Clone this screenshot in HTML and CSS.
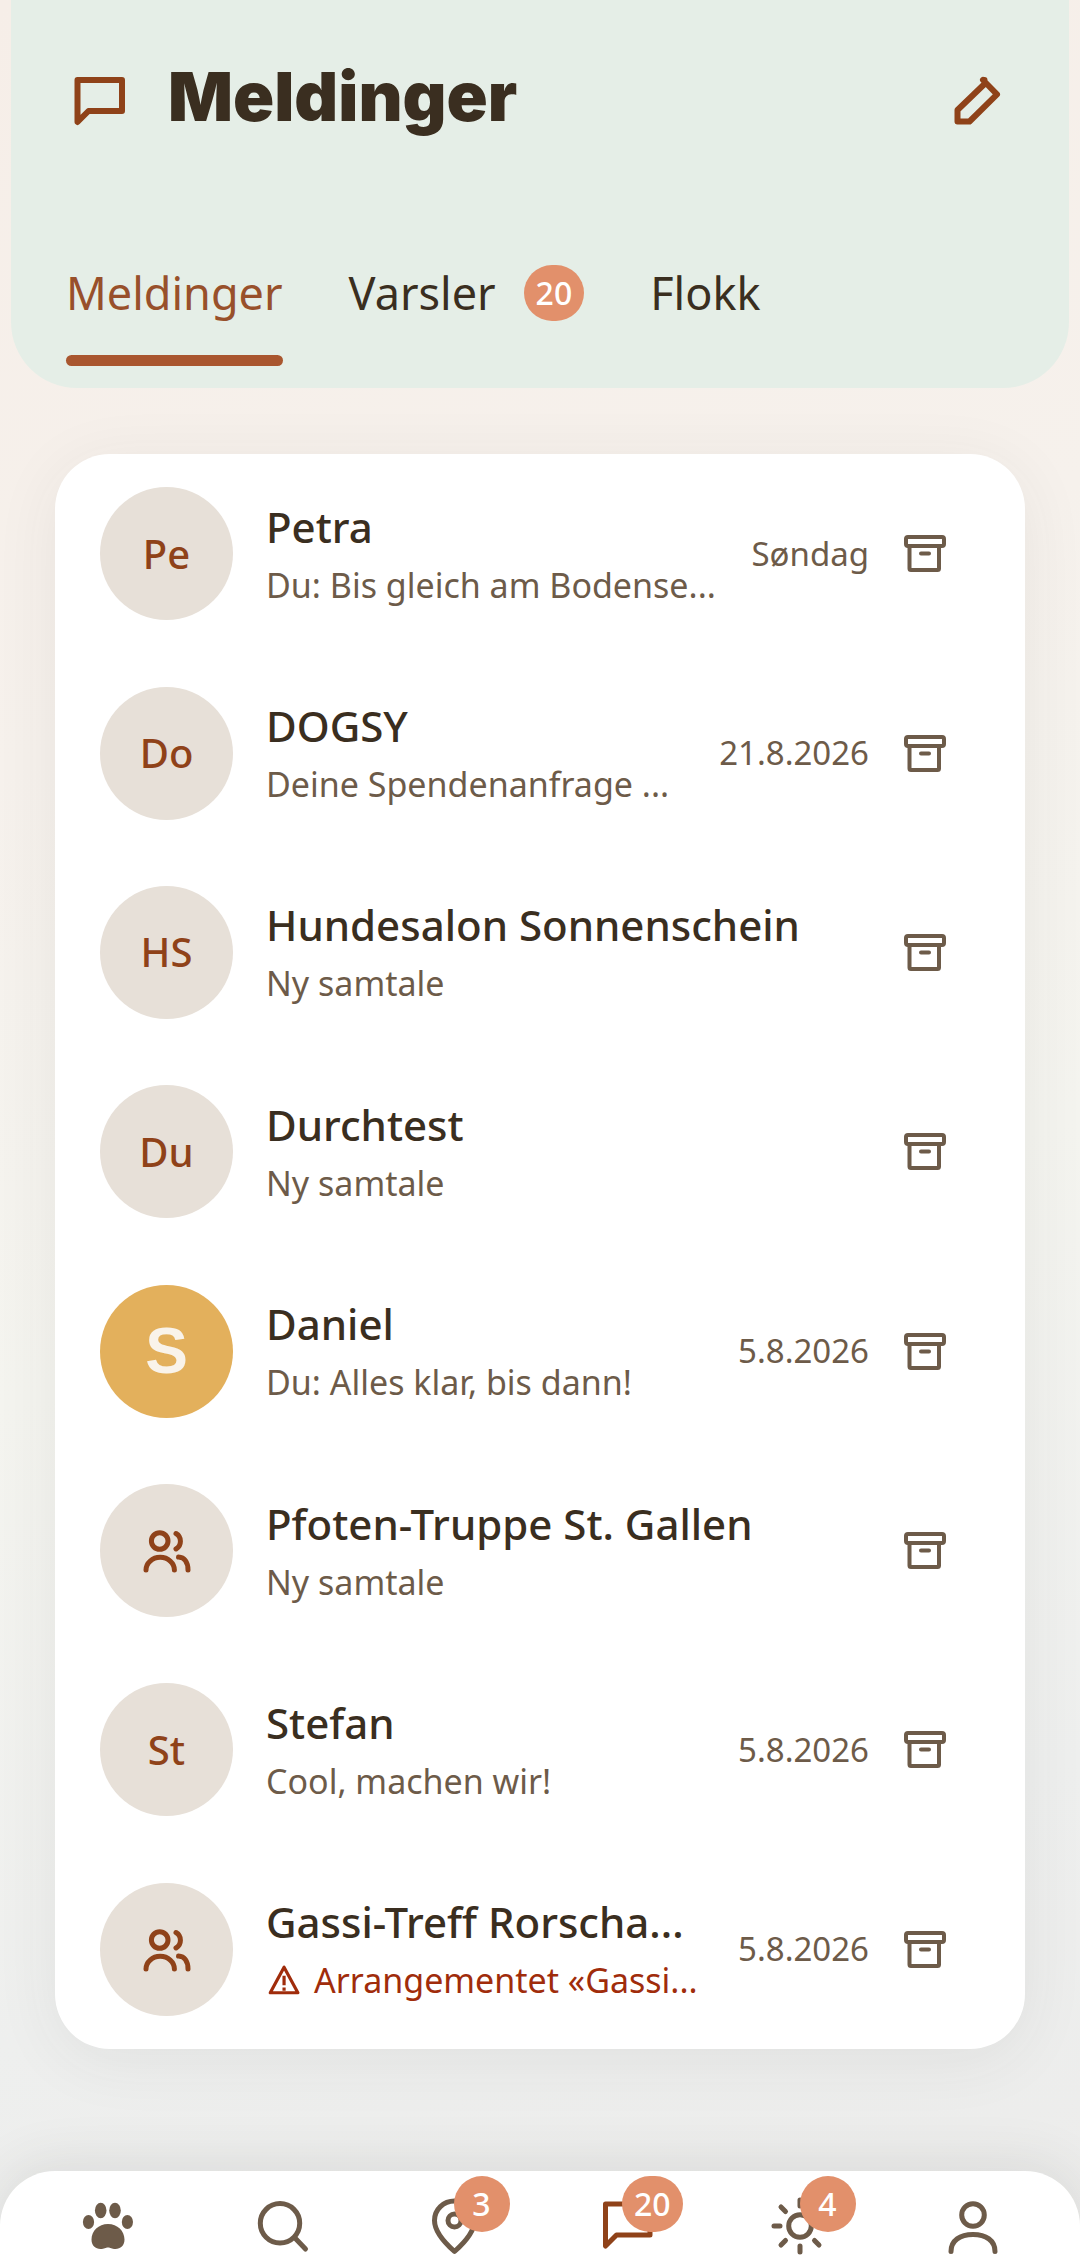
FILE: index.html
```html
<!DOCTYPE html>
<html lang="no">
<head>
    <meta charset="UTF-8">
    <meta name="viewport" content="width=device-width, initial-scale=1.0">
    <title>Meldinger</title>
    <link rel="stylesheet" href="styles.css">
</head>
<body>

    <!-- Shared icons -->
    <svg class="sprite" aria-hidden="true">
        <symbol id="icon-archive" viewBox="0 0 55 55">
            <rect x="9" y="11" width="38" height="9" rx="2"/>
            <path d="M12.5 20v22.5a1.5 1.5 0 0 0 1.5 1.5h26.5a1.5 1.5 0 0 0 1.5-1.5V20M24 27.5h8"/>
        </symbol>
        <symbol id="icon-chat" viewBox="0 0 66 66">
            <path d="M11.5 11H56v31H22.5L11.5 53z"/>
        </symbol>
        <symbol id="icon-group" viewBox="0 0 55 55">
            <circle cx="20.7" cy="18" r="8.3"/>
            <path d="M7 47a14.2 12.7 0 0 1 28.4 0M37 10.5a9 9 0 0 1 0 15.5M39.5 34c6 .3 9.5 5 9.5 13"/>
        </symbol>
    </svg>

    <header class="header">
        <div class="header-top">
            <svg class="icon icon-lg"><use href="#icon-chat"/></svg>
            <h1>Meldinger</h1>
            <button class="edit-btn" type="button" aria-label="Ny melding">
                <svg class="icon icon-lg" viewBox="0 0 66 66">
                    <path d="M36.5 15 9.5 41v11.5h12L49 25.3 35 11M36.5 11v4"/>
                </svg>
            </button>
        </div>
        <nav class="tabs">
            <a class="tab active" href="#meldinger">Meldinger</a>
            <a class="tab" href="#varsler">Varsler <span class="badge">20</span></a>
            <a class="tab" href="#flokk">Flokk</a>
        </nav>
    </header>

    <main>
        <ul class="chat-list">
            <li class="chat">
                <span class="avatar">Pe</span>
                <a class="chat-text" href="#petra">
                    <span class="name">Petra</span>
                    <span class="preview">Du: Bis gleich am Bodense...</span>
                </a>
                <time>Søndag</time>
                <button class="archive-btn" type="button" aria-label="Arkiver"><svg class="icon"><use href="#icon-archive"/></svg></button>
            </li>
            <li class="chat">
                <span class="avatar">Do</span>
                <a class="chat-text" href="#dogsy">
                    <span class="name">DOGSY</span>
                    <span class="preview">Deine Spendenanfrage ...</span>
                </a>
                <time>21.8.2026</time>
                <button class="archive-btn" type="button" aria-label="Arkiver"><svg class="icon"><use href="#icon-archive"/></svg></button>
            </li>
            <li class="chat">
                <span class="avatar">HS</span>
                <a class="chat-text" href="#hundesalon">
                    <span class="name">Hundesalon Sonnenschein</span>
                    <span class="preview">Ny samtale</span>
                </a>
                <button class="archive-btn" type="button" aria-label="Arkiver"><svg class="icon"><use href="#icon-archive"/></svg></button>
            </li>
            <li class="chat">
                <span class="avatar">Du</span>
                <a class="chat-text" href="#durchtest">
                    <span class="name">Durchtest</span>
                    <span class="preview">Ny samtale</span>
                </a>
                <button class="archive-btn" type="button" aria-label="Arkiver"><svg class="icon"><use href="#icon-archive"/></svg></button>
            </li>
            <li class="chat">
                <span class="avatar avatar-photo">S</span>
                <a class="chat-text" href="#daniel">
                    <span class="name">Daniel</span>
                    <span class="preview">Du: Alles klar, bis dann!</span>
                </a>
                <time>5.8.2026</time>
                <button class="archive-btn" type="button" aria-label="Arkiver"><svg class="icon"><use href="#icon-archive"/></svg></button>
            </li>
            <li class="chat">
                <span class="avatar"><svg class="icon"><use href="#icon-group"/></svg></span>
                <a class="chat-text" href="#pfoten-truppe">
                    <span class="name">Pfoten-Truppe St. Gallen</span>
                    <span class="preview">Ny samtale</span>
                </a>
                <button class="archive-btn" type="button" aria-label="Arkiver"><svg class="icon"><use href="#icon-archive"/></svg></button>
            </li>
            <li class="chat">
                <span class="avatar">St</span>
                <a class="chat-text" href="#stefan">
                    <span class="name">Stefan</span>
                    <span class="preview">Cool, machen wir!</span>
                </a>
                <time>5.8.2026</time>
                <button class="archive-btn" type="button" aria-label="Arkiver"><svg class="icon"><use href="#icon-archive"/></svg></button>
            </li>
            <li class="chat">
                <span class="avatar"><svg class="icon"><use href="#icon-group"/></svg></span>
                <a class="chat-text" href="#gassi-treff">
                    <span class="name">Gassi-Treff Rorscha...</span>
                    <span class="preview warning"><svg class="warning-icon" viewBox="0 0 32 32"><path d="M17 4 4 28h26zM17 12v9M17 23v3"/></svg>Arrangementet «Gassi...</span>
                </a>
                <time>5.8.2026</time>
                <button class="archive-btn" type="button" aria-label="Arkiver"><svg class="icon"><use href="#icon-archive"/></svg></button>
            </li>
        </ul>
    </main>

    <!-- Bottom navigation -->
    <nav class="bottom-nav">
        <a href="#hjem" aria-label="Hjem">
            <svg class="icon icon-lg paw" viewBox="0 0 66 66">
                <ellipse cx="13.5" cy="29" rx="5.6" ry="7"/>
                <ellipse cx="25.7" cy="17.5" rx="5.8" ry="7.7"/>
                <ellipse cx="40" cy="17.5" rx="5.8" ry="7.7"/>
                <ellipse cx="52.4" cy="29" rx="5.6" ry="7"/>
                <path d="M33 31c9.5 0 16.5 7 16.5 15.5 0 6-4 9.500-9 9.500-4 0-5-1.500-7.500-1.500S29.500 56 25.500 56c-5 0-9-3.500-9-9.500C16.500 38 23.500 31 33 31z"/>
            </svg>
        </a>
        <a href="#sok" aria-label="Søk">
            <svg class="icon icon-lg" viewBox="0 0 66 66">
                <circle cx="32" cy="30.3" r="19.7"/>
                <path d="m47 45 10.5 11"/>
            </svg>
        </a>
        <a href="#kart" aria-label="Kart">
            <svg class="icon icon-lg" viewBox="0 0 66 66">
                <path d="M33.5 58.5C25 51 13.5 39.5 13.5 27.5c0-11 9-19.500 20-19.500s20 8.500 20 19.500c0 12-11.500 23.500-20 31z"/>
                <circle cx="33.5" cy="27.5" r="6.5"/>
            </svg>
            <span class="badge">3</span>
        </a>
        <a class="current" href="#meldinger" aria-label="Meldinger">
            <svg class="icon icon-lg"><use href="#icon-chat"/></svg>
            <span class="badge">20</span>
        </a>
        <a href="#aktiviteter" aria-label="Aktiviteter">
            <svg class="icon icon-lg" viewBox="0 0 66 66">
                <circle cx="33" cy="33" r="11.3"/>
                <path d="M33 7v6M33 53v6M7 33h6M53 33h6M14 14l4.500 4.500M47.500 47.500 52 52M14 52l4.500-4.500M47.500 18.500 52 14"/>
            </svg>
            <span class="badge">4</span>
        </a>
        <a href="#profil" aria-label="Profil">
            <svg class="icon icon-lg" viewBox="0 0 66 66">
                <circle cx="33" cy="22" r="11.3"/>
                <path d="M11 58.5c0-11 9-17 22-17s22 6 22 17"/>
            </svg>
        </a>
    </nav>

</body>
</html>
```

FILE: styles.css
```css
* {
    box-sizing: border-box;
}
body {
    margin: 0;
    min-height: 100vh;
    display: flex;
    flex-direction: column;
    font-family: "Noto Sans", sans-serif;
    color: #3a2e20;
    background: linear-gradient(165deg, #f6eee8 0%, #f6f1ec 30%, #f4f4ef 55%, #eeefee 80%, #ececeb 100%);
}
a {
    color: inherit;
    text-decoration: none;
}
button {
    padding: 0;
    border: none;
    background: none;
    color: inherit;
    cursor: pointer;
}
.sprite {
    position: absolute;
    width: 0;
    height: 0;
}
.icon {
    display: block;
    width: 55px;
    height: 55px;
    fill: none;
    stroke: currentColor;
    stroke-width: 4px;
    stroke-linecap: round;
    stroke-linejoin: round;
}
.icon-lg {
    width: 66px;
    height: 66px;
    stroke-width: 5px;
}

/* Header */
.header {
    margin: 0 11px;
    padding: 52px 55px 22px;
    background: #e5eee7;
    border-radius: 0 0 66px 66px;
}
.header-top {
    display: flex;
    align-items: center;
    gap: 36px;
    margin-bottom: 106px;
    color: #8f4219;
}
.header-top .icon {
    stroke-width: 6px;
}
h1 {
    flex: 1;
    margin: 0;
    padding-bottom: 12px;
    font-family: Inter, sans-serif;
    font-size: 68px;
    line-height: 88px;
    font-weight: 900;
    color: #3a2e20;
}
.tabs {
    display: flex;
    gap: 66px;
}
.tab {
    display: flex;
    align-items: center;
    gap: 28px;
    height: 108px;
    padding-bottom: 38px;
    font-size: 45px;
    line-height: 70px;
}
.tab.active {
    flex-direction: column;
    gap: 27px;
    padding-bottom: 0;
    color: #98502b;
}
.tab.active::after {
    content: "";
    width: 100%;
    height: 11px;
    border-radius: 6px;
    background: #a9562f;
}
.badge {
    min-width: 56px;
    padding: 0 12px;
    border-radius: 28px;
    background: #e2906b;
    color: #fff;
    font-size: 32px;
    line-height: 56px;
    font-weight: 500;
    text-align: center;
}

/* Chat list */
main {
    flex: 1;
    display: flex;
    padding: 66px 55px 122px;
}
.chat-list {
    flex: 1;
    min-width: 0;
    display: grid;
    grid-auto-rows: 1fr;
    margin: 0;
    padding: 0;
    list-style: none;
    background: #fff;
    border-radius: 55px;
    box-shadow: 0 11px 66px rgba(60, 60, 55, 0.07);
}
.chat {
    display: flex;
    align-items: center;
    min-width: 0;
    padding: 33px 73px 33px 45px;
}
.avatar {
    flex: none;
    display: flex;
    align-items: center;
    justify-content: center;
    width: 133px;
    height: 133px;
    margin-right: 33px;
    border-radius: 50%;
    background: #e7e0d8;
    color: #8f4219;
    font-size: 40px;
    line-height: 54px;
    font-weight: 500;
}
.avatar .icon {
    stroke-width: 5px;
}
.avatar-photo {
    background: #e3b05c;
    color: #f9f3ea;
    font-family: "Liberation Sans", sans-serif;
    font-size: 64px;
    font-weight: bold;
}
.chat-text {
    flex: 1;
    min-width: 0;
}
.name,
.preview {
    display: block;
    overflow: hidden;
    white-space: nowrap;
    text-overflow: ellipsis;
}
.name {
    font-size: 42px;
    line-height: 62px;
    font-weight: 500;
}
.preview {
    font-size: 34px;
    line-height: 54px;
    color: #6d5b49;
}
.warning {
    color: #a02c0b;
}
.warning-icon {
    width: 34px;
    height: 34px;
    margin-right: 14px;
    vertical-align: -4px;
    fill: none;
    stroke: currentColor;
    stroke-width: 3px;
    stroke-linejoin: round;
}
time {
    margin-left: 20px;
    font-size: 33px;
    line-height: 54px;
    color: #6d5b49;
}
.archive-btn {
    margin-left: 28px;
    color: #6d5b49;
}

/* Bottom navigation */
.bottom-nav {
    position: sticky;
    bottom: 0;
    display: grid;
    grid-template-columns: repeat(6, 1fr);
    justify-items: center;
    padding: 22px 21px 9px;
    background: #fff;
    border-radius: 55px 55px 0 0;
    box-shadow: 0 -6px 55px rgba(60, 60, 55, 0.11);
    color: #6d5b49;
}
.bottom-nav a {
    position: relative;
}
.bottom-nav .current {
    color: #8f4219;
}
.bottom-nav .badge {
    position: absolute;
    top: -17px;
    right: -23px;
}
.paw {
    fill: currentColor;
    stroke: none;
}
```
